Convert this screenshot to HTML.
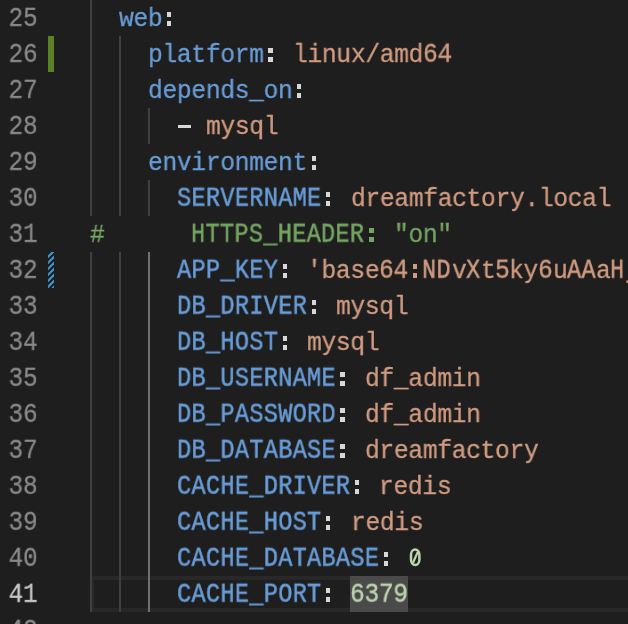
<!DOCTYPE html>
<html><head><meta charset="utf-8"><style>
html,body{margin:0;padding:0;background:#1e1e1e;width:628px;height:624px;overflow:hidden;position:relative}
.t,.ln{position:absolute;white-space:pre;font-family:"Liberation Mono",monospace;font-size:26.5px;line-height:36px;letter-spacing:-1.4526px;height:36px;will-change:transform;-webkit-text-stroke:0.35px;transform-origin:0 25px}
.ln{color:#8a8a8a;text-align:right;right:590.4px;transform-origin:100% 25px;transform:scale(0.92,1.045);-webkit-text-stroke:0.25px;letter-spacing:-0.03px}
.g{position:absolute;width:2px;background:#404040}
.ga{background:#707070}
.d{position:absolute;width:4.4px;height:5px}
</style></head><body>

<div style="position:absolute;left:90px;top:576px;width:548px;height:28px;border:4px solid #282828;"></div>
<div style="position:absolute;left:350.10px;top:576px;width:57.80px;height:36px;background:#4a4a4a"></div>
<div style="position:absolute;left:48px;top:36px;width:6px;height:36px;background:#5a8125"></div>
<svg style="position:absolute;left:48px;top:252px" width="6" height="36"><rect width="6" height="36" fill="#171717"/><polygon points="0,-5.40 0,-8.70 6,-14.70 6,-11.40" fill="#4292c4"/><polygon points="0,0.60 0,-2.70 6,-8.70 6,-5.40" fill="#4292c4"/><polygon points="0,6.60 0,3.30 6,-2.70 6,0.60" fill="#4292c4"/><polygon points="0,12.60 0,9.30 6,3.30 6,6.60" fill="#4292c4"/><polygon points="0,18.60 0,15.30 6,9.30 6,12.60" fill="#4292c4"/><polygon points="0,24.60 0,21.30 6,15.30 6,18.60" fill="#4292c4"/><polygon points="0,30.60 0,27.30 6,21.30 6,24.60" fill="#4292c4"/><polygon points="0,36.60 0,33.30 6,27.30 6,30.60" fill="#4292c4"/><polygon points="0,42.60 0,39.30 6,33.30 6,36.60" fill="#4292c4"/><polygon points="0,48.60 0,45.30 6,39.30 6,42.60" fill="#4292c4"/><polygon points="0,54.60 0,51.30 6,45.30 6,48.60" fill="#4292c4"/></svg>
<div class="g" style="left:90.00px;top:0px;height:36px"></div>
<div class="g" style="left:90.00px;top:36px;height:36px"></div>
<div class="g" style="left:118.90px;top:36px;height:36px"></div>
<div class="g" style="left:90.00px;top:72px;height:36px"></div>
<div class="g" style="left:118.90px;top:72px;height:36px"></div>
<div class="g" style="left:90.00px;top:108px;height:36px"></div>
<div class="g" style="left:118.90px;top:108px;height:36px"></div>
<div class="g" style="left:147.80px;top:108px;height:36px"></div>
<div class="g" style="left:90.00px;top:144px;height:36px"></div>
<div class="g" style="left:118.90px;top:144px;height:36px"></div>
<div class="g" style="left:90.00px;top:180px;height:36px"></div>
<div class="g" style="left:118.90px;top:180px;height:36px"></div>
<div class="g" style="left:147.80px;top:180px;height:36px"></div>
<div class="g" style="left:90.00px;top:252px;height:36px"></div>
<div class="g" style="left:118.90px;top:252px;height:36px"></div>
<div class="g ga" style="left:147.80px;top:252px;height:36px"></div>
<div class="g" style="left:90.00px;top:288px;height:36px"></div>
<div class="g" style="left:118.90px;top:288px;height:36px"></div>
<div class="g ga" style="left:147.80px;top:288px;height:36px"></div>
<div class="g" style="left:90.00px;top:324px;height:36px"></div>
<div class="g" style="left:118.90px;top:324px;height:36px"></div>
<div class="g ga" style="left:147.80px;top:324px;height:36px"></div>
<div class="g" style="left:90.00px;top:360px;height:36px"></div>
<div class="g" style="left:118.90px;top:360px;height:36px"></div>
<div class="g ga" style="left:147.80px;top:360px;height:36px"></div>
<div class="g" style="left:90.00px;top:396px;height:36px"></div>
<div class="g" style="left:118.90px;top:396px;height:36px"></div>
<div class="g ga" style="left:147.80px;top:396px;height:36px"></div>
<div class="g" style="left:90.00px;top:432px;height:36px"></div>
<div class="g" style="left:118.90px;top:432px;height:36px"></div>
<div class="g ga" style="left:147.80px;top:432px;height:36px"></div>
<div class="g" style="left:90.00px;top:468px;height:36px"></div>
<div class="g" style="left:118.90px;top:468px;height:36px"></div>
<div class="g ga" style="left:147.80px;top:468px;height:36px"></div>
<div class="g" style="left:90.00px;top:504px;height:36px"></div>
<div class="g" style="left:118.90px;top:504px;height:36px"></div>
<div class="g ga" style="left:147.80px;top:504px;height:36px"></div>
<div class="g" style="left:90.00px;top:540px;height:36px"></div>
<div class="g" style="left:118.90px;top:540px;height:36px"></div>
<div class="g ga" style="left:147.80px;top:540px;height:36px"></div>
<div class="g" style="left:90.00px;top:576px;height:36px"></div>
<div class="g" style="left:118.90px;top:576px;height:36px"></div>
<div class="g ga" style="left:147.80px;top:576px;height:36px"></div>
<div class="ln" style="top:1px;color:#8a8a8a">25</div>
<div class="t" style="left:119.30px;top:1px;color:#699dd8;letter-spacing:-0.3650px;transform:scale(0.93,1.0);-webkit-text-stroke:0.3px">web</div>
<div class="ln" style="top:37px;color:#8a8a8a">26</div>
<div class="t" style="left:148.20px;top:37px;color:#699dd8;letter-spacing:-0.3650px;transform:scale(0.93,1.0);-webkit-text-stroke:0.3px">platform</div>
<div class="t" style="left:292.70px;top:37px;color:#d09b80;letter-spacing:-0.3650px;transform:scale(0.93,1.0);-webkit-text-stroke:0.3px">linux/amd</div>
<div class="t" style="left:422.55px;top:37px;color:#d09b80;letter-spacing:-0.3650px;transform:scale(0.93,1.05);-webkit-text-stroke:0.4px">64</div>
<div class="ln" style="top:73px;color:#8a8a8a">27</div>
<div class="t" style="left:148.20px;top:73px;color:#699dd8;letter-spacing:-0.3650px;transform:scale(0.93,1.0);-webkit-text-stroke:0.3px">depends_on</div>
<div class="ln" style="top:109px;color:#8a8a8a">28</div>
<div class="t" style="left:206.00px;top:109px;color:#d09b80;letter-spacing:-0.3650px;transform:scale(0.93,1.0);-webkit-text-stroke:0.3px">mysql</div>
<div class="ln" style="top:145px;color:#8a8a8a">29</div>
<div class="t" style="left:148.20px;top:145px;color:#699dd8;letter-spacing:-0.3650px;transform:scale(0.93,1.0);-webkit-text-stroke:0.3px">environment</div>
<div class="ln" style="top:181px;color:#8a8a8a">30</div>
<div class="t" style="left:176.60px;top:181px;color:#699dd8;letter-spacing:0.3334px;transform:scale(0.89,1.05);-webkit-text-stroke:0.5px">SERVERNAME</div>
<div class="t" style="left:350.50px;top:181px;color:#d09b80;letter-spacing:-0.3650px;transform:scale(0.93,1.0);-webkit-text-stroke:0.3px">dreamfactory.local</div>
<div class="ln" style="top:217px;color:#8a8a8a">31</div>
<div class="t" style="left:90.40px;top:217px;color:#74a562;letter-spacing:-0.3650px;transform:scale(0.93,1.0);-webkit-text-stroke:0.3px">#</div>
<div class="t" style="left:191.05px;top:217px;color:#74a562;letter-spacing:0.3334px;transform:scale(0.89,1.05);-webkit-text-stroke:0.5px">HTTPS_HEADER</div>
<div class="t" style="left:393.85px;top:217px;color:#74a562;letter-spacing:-0.3650px;transform:scale(0.93,1.0);-webkit-text-stroke:0.3px">"on"</div>
<div class="ln" style="top:253px;color:#8a8a8a">32</div>
<div class="t" style="left:176.60px;top:253px;color:#699dd8;letter-spacing:0.3334px;transform:scale(0.89,1.05);-webkit-text-stroke:0.5px">APP_KEY</div>
<div class="t" style="left:307.15px;top:253px;color:#d09b80;letter-spacing:-0.3650px;transform:scale(0.93,1.0);-webkit-text-stroke:0.3px">'base</div>
<div class="t" style="left:379.20px;top:253px;color:#d09b80;letter-spacing:-0.3650px;transform:scale(0.93,1.05);-webkit-text-stroke:0.4px">64 </div>
<div class="t" style="left:422.25px;top:253px;color:#d09b80;letter-spacing:0.3334px;transform:scale(0.89,1.05);-webkit-text-stroke:0.5px">ND</div>
<div class="t" style="left:451.65px;top:253px;color:#d09b80;letter-spacing:-0.3650px;transform:scale(0.93,1.0);-webkit-text-stroke:0.3px">v</div>
<div class="t" style="left:465.60px;top:253px;color:#d09b80;letter-spacing:0.3334px;transform:scale(0.89,1.05);-webkit-text-stroke:0.5px">X</div>
<div class="t" style="left:480.55px;top:253px;color:#d09b80;letter-spacing:-0.3650px;transform:scale(0.93,1.0);-webkit-text-stroke:0.3px">t</div>
<div class="t" style="left:494.80px;top:253px;color:#d09b80;letter-spacing:-0.3650px;transform:scale(0.93,1.05);-webkit-text-stroke:0.4px">5</div>
<div class="t" style="left:509.45px;top:253px;color:#d09b80;letter-spacing:-0.3650px;transform:scale(0.93,1.0);-webkit-text-stroke:0.3px">ky</div>
<div class="t" style="left:538.15px;top:253px;color:#d09b80;letter-spacing:-0.3650px;transform:scale(0.93,1.05);-webkit-text-stroke:0.4px">6</div>
<div class="t" style="left:552.80px;top:253px;color:#d09b80;letter-spacing:-0.3650px;transform:scale(0.93,1.0);-webkit-text-stroke:0.3px">u</div>
<div class="t" style="left:566.75px;top:253px;color:#d09b80;letter-spacing:0.3334px;transform:scale(0.89,1.05);-webkit-text-stroke:0.5px">AA</div>
<div class="t" style="left:596.15px;top:253px;color:#d09b80;letter-spacing:-0.3650px;transform:scale(0.93,1.0);-webkit-text-stroke:0.3px">a</div>
<div class="t" style="left:610.10px;top:253px;color:#d09b80;letter-spacing:0.3334px;transform:scale(0.89,1.05);-webkit-text-stroke:0.5px">H</div>
<div class="t" style="left:625.05px;top:253px;color:#d09b80;letter-spacing:-0.3650px;transform:scale(0.93,1.0);-webkit-text-stroke:0.3px">j</div>
<div class="ln" style="top:289px;color:#8a8a8a">33</div>
<div class="t" style="left:176.60px;top:289px;color:#699dd8;letter-spacing:0.3334px;transform:scale(0.89,1.05);-webkit-text-stroke:0.5px">DB_DRIVER</div>
<div class="t" style="left:336.05px;top:289px;color:#d09b80;letter-spacing:-0.3650px;transform:scale(0.93,1.0);-webkit-text-stroke:0.3px">mysql</div>
<div class="ln" style="top:325px;color:#8a8a8a">34</div>
<div class="t" style="left:176.60px;top:325px;color:#699dd8;letter-spacing:0.3334px;transform:scale(0.89,1.05);-webkit-text-stroke:0.5px">DB_HOST</div>
<div class="t" style="left:307.15px;top:325px;color:#d09b80;letter-spacing:-0.3650px;transform:scale(0.93,1.0);-webkit-text-stroke:0.3px">mysql</div>
<div class="ln" style="top:361px;color:#8a8a8a">35</div>
<div class="t" style="left:176.60px;top:361px;color:#699dd8;letter-spacing:0.3334px;transform:scale(0.89,1.05);-webkit-text-stroke:0.5px">DB_USERNAME</div>
<div class="t" style="left:364.95px;top:361px;color:#d09b80;letter-spacing:-0.3650px;transform:scale(0.93,1.0);-webkit-text-stroke:0.3px">df_admin</div>
<div class="ln" style="top:397px;color:#8a8a8a">36</div>
<div class="t" style="left:176.60px;top:397px;color:#699dd8;letter-spacing:0.3334px;transform:scale(0.89,1.05);-webkit-text-stroke:0.5px">DB_PASSWORD</div>
<div class="t" style="left:364.95px;top:397px;color:#d09b80;letter-spacing:-0.3650px;transform:scale(0.93,1.0);-webkit-text-stroke:0.3px">df_admin</div>
<div class="ln" style="top:433px;color:#8a8a8a">37</div>
<div class="t" style="left:176.60px;top:433px;color:#699dd8;letter-spacing:0.3334px;transform:scale(0.89,1.05);-webkit-text-stroke:0.5px">DB_DATABASE</div>
<div class="t" style="left:364.95px;top:433px;color:#d09b80;letter-spacing:-0.3650px;transform:scale(0.93,1.0);-webkit-text-stroke:0.3px">dreamfactory</div>
<div class="ln" style="top:469px;color:#8a8a8a">38</div>
<div class="t" style="left:176.60px;top:469px;color:#699dd8;letter-spacing:0.3334px;transform:scale(0.89,1.05);-webkit-text-stroke:0.5px">CACHE_DRIVER</div>
<div class="t" style="left:379.40px;top:469px;color:#d09b80;letter-spacing:-0.3650px;transform:scale(0.93,1.0);-webkit-text-stroke:0.3px">redis</div>
<div class="ln" style="top:505px;color:#8a8a8a">39</div>
<div class="t" style="left:176.60px;top:505px;color:#699dd8;letter-spacing:0.3334px;transform:scale(0.89,1.05);-webkit-text-stroke:0.5px">CACHE_HOST</div>
<div class="t" style="left:350.50px;top:505px;color:#d09b80;letter-spacing:-0.3650px;transform:scale(0.93,1.0);-webkit-text-stroke:0.3px">redis</div>
<div class="ln" style="top:541px;color:#8a8a8a">40</div>
<div class="t" style="left:176.60px;top:541px;color:#699dd8;letter-spacing:0.3334px;transform:scale(0.89,1.05);-webkit-text-stroke:0.5px">CACHE_DATABASE</div>
<div class="ln" style="top:577px;color:#c8c8c8">41</div>
<div class="t" style="left:176.60px;top:577px;color:#699dd8;letter-spacing:0.3334px;transform:scale(0.89,1.05);-webkit-text-stroke:0.5px">CACHE_PORT</div>
<div class="t" style="left:350.30px;top:577px;color:#bdd4ae;letter-spacing:-0.3650px;transform:scale(0.93,1.05);-webkit-text-stroke:0.4px">6379</div>
<div class="ln" style="top:613px;color:#8a8a8a">42</div>
<div class="d" style="left:167.05px;top:12px;background:#d8d8d8"></div>
<div class="d" style="left:167.05px;top:21px;background:#d8d8d8"></div>
<div class="d" style="left:268.20px;top:48px;background:#d8d8d8"></div>
<div class="d" style="left:268.20px;top:57px;background:#d8d8d8"></div>
<div class="d" style="left:297.10px;top:84px;background:#d8d8d8"></div>
<div class="d" style="left:297.10px;top:93px;background:#d8d8d8"></div>
<div style="position:absolute;left:177.60px;top:124.5px;width:13px;height:3.5px;background:#d8d8d8"></div>
<div class="d" style="left:311.55px;top:156px;background:#d8d8d8"></div>
<div class="d" style="left:311.55px;top:165px;background:#d8d8d8"></div>
<div class="d" style="left:326.00px;top:192px;background:#d8d8d8"></div>
<div class="d" style="left:326.00px;top:201px;background:#d8d8d8"></div>
<div class="d" style="left:369.35px;top:228px;background:#74a562"></div>
<div class="d" style="left:369.35px;top:237px;background:#74a562"></div>
<div class="d" style="left:282.65px;top:264px;background:#d8d8d8"></div>
<div class="d" style="left:282.65px;top:273px;background:#d8d8d8"></div>
<div class="d" style="left:412.70px;top:264px;background:#d09b80"></div>
<div class="d" style="left:412.70px;top:273px;background:#d09b80"></div>
<div class="d" style="left:311.55px;top:300px;background:#d8d8d8"></div>
<div class="d" style="left:311.55px;top:309px;background:#d8d8d8"></div>
<div class="d" style="left:282.65px;top:336px;background:#d8d8d8"></div>
<div class="d" style="left:282.65px;top:345px;background:#d8d8d8"></div>
<div class="d" style="left:340.45px;top:372px;background:#d8d8d8"></div>
<div class="d" style="left:340.45px;top:381px;background:#d8d8d8"></div>
<div class="d" style="left:340.45px;top:408px;background:#d8d8d8"></div>
<div class="d" style="left:340.45px;top:417px;background:#d8d8d8"></div>
<div class="d" style="left:340.45px;top:444px;background:#d8d8d8"></div>
<div class="d" style="left:340.45px;top:453px;background:#d8d8d8"></div>
<div class="d" style="left:354.90px;top:480px;background:#d8d8d8"></div>
<div class="d" style="left:354.90px;top:489px;background:#d8d8d8"></div>
<div class="d" style="left:326.00px;top:516px;background:#d8d8d8"></div>
<div class="d" style="left:326.00px;top:525px;background:#d8d8d8"></div>
<div class="d" style="left:383.80px;top:552px;background:#d8d8d8"></div>
<div class="d" style="left:383.80px;top:561px;background:#d8d8d8"></div>
<svg style="position:absolute;left:407.90px;top:540px" width="15" height="36"><rect x="3.0" y="9.6" width="8.4" height="15.4" rx="4.2" ry="5.2" fill="none" stroke="#bdd4ae" stroke-width="2.5"/><line x1="4.9" y1="23" x2="9.9" y2="11.6" stroke="#bdd4ae" stroke-width="2.2"/></svg>
<div class="d" style="left:326.00px;top:588px;background:#d8d8d8"></div>
<div class="d" style="left:326.00px;top:597px;background:#d8d8d8"></div>
</body></html>
